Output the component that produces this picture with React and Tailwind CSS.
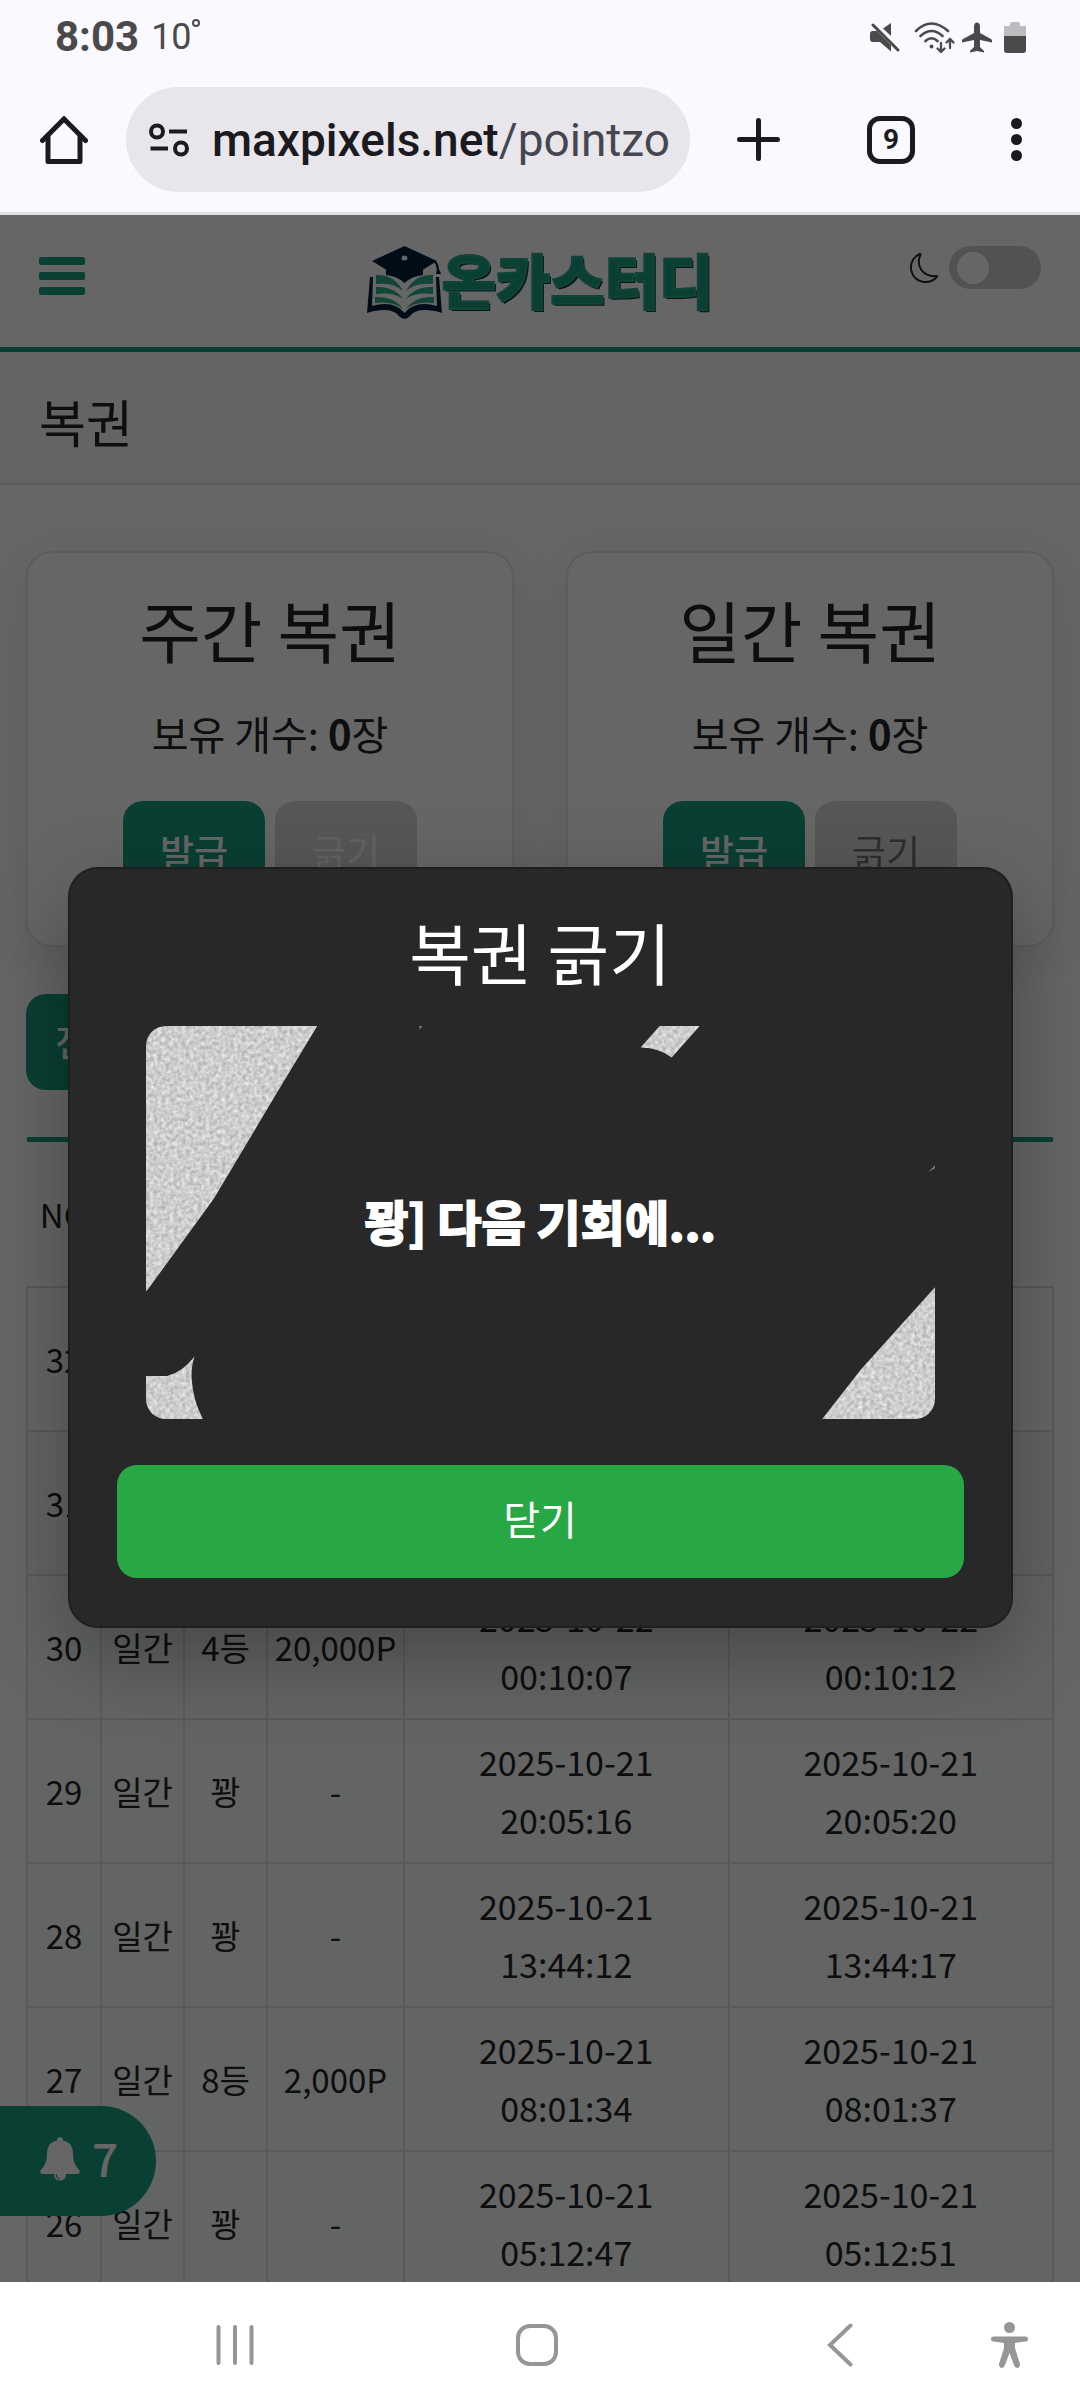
import React from 'react';
import { BsMoon } from 'react-icons/bs';

const rows = [
    { no: 32 },
    { no: 31 },
    { no: 30, type: '일간', rank: '4등', prize: '20,000P', issued: ['2025-10-22', '00:10:07'], scratched: ['2025-10-22', '00:10:12'] },
    { no: 29, type: '일간', rank: '꽝', prize: '-', issued: ['2025-10-21', '20:05:16'], scratched: ['2025-10-21', '20:05:20'] },
    { no: 28, type: '일간', rank: '꽝', prize: '-', issued: ['2025-10-21', '13:44:12'], scratched: ['2025-10-21', '13:44:17'] },
    { no: 27, type: '일간', rank: '8등', prize: '2,000P', issued: ['2025-10-21', '08:01:34'], scratched: ['2025-10-21', '08:01:37'] },
    { no: 26, type: '일간', rank: '꽝', prize: '-', issued: ['2025-10-21', '05:12:47'], scratched: ['2025-10-21', '05:12:51'] },
];

const StatusBar = () => (
    <div className="flex h-[74px] items-center justify-between pl-[55px] pr-[54px] text-[#4a4a4a] font-[Roboto,sans-serif]">
        <div className="flex items-center gap-3">
            <span className="text-[42px] font-bold leading-none">8:03</span>
            <span className="flex items-start text-[36px] leading-none">
                10
                <svg className="size-2" viewBox="0 0 8 8" fill="none" stroke="currentColor" strokeWidth="2">
                    <circle cx="4" cy="4" r="3" />
                </svg>
            </span>
        </div>
        <div className="flex items-center">
            <svg className="h-[32px] w-[30px]" viewBox="0 0 30 32" fill="currentColor">
                <path d="M3 10h4l14 14v6.500L10 21H3q-3 0-3-3v-5q0-3 3-3z" />
                <path d="M21 2v13l-8-7.500z" />
                <path d="M3 4l25 25" stroke="currentColor" strokeWidth="3" strokeLinecap="round" />
            </svg>
            <svg className="ml-[14px] h-[32px] w-[42px]" viewBox="0 0 42 32" fill="none" stroke="currentColor" strokeWidth="2.600" strokeLinecap="round">
                <path d="M2 10q15-15 32 0M6.500 15q11-10 22 0M11.500 20q6-5.500 12 0" />
                <circle cx="17.500" cy="25.500" r="1" fill="currentColor" strokeWidth="2" />
                <path d="M27 22v8M23.500 27.500l3.500 3.500 3.500-3.500M36 27v-8M32.500 21.500l3.500-3.500 3.500 3.500" strokeWidth="2.300" />
            </svg>
            <svg className="ml-[5px] h-[32px] w-[32px]" viewBox="0 0 32 32" fill="currentColor">
                <path d="M16 1.500c2 0 3 2 3 4V12l11 6q1 .5 1 1.500v2l-12-2.500v7l4 4v1.500l-7-1.500-7 1.500V30l4-4v-7L1 21.500v-2q0-1 1-1.500l11-6V5.500c0-2 1-4 3-4z" />
            </svg>
            <svg className="ml-[11px] h-[32px] w-[22px]" viewBox="0 0 22 32" fill="currentColor">
                <path d="M0 15V5h6V3q0-2 2-2h6q2 0 2 2v2h6v10z" opacity="0.350" />
                <path d="M0 15h22v14q0 3-3 3H3q-3 0-3-3z" />
            </svg>
        </div>
    </div>
);

const BrowserBar = () => (
    <div className="flex h-[131px] items-center pl-10 pr-[58px] text-[#1b1a20] font-[Roboto,sans-serif]">
        <button type="button" aria-label="홈">
            <svg className="size-[48px]" viewBox="0 0 48 48" fill="none" stroke="currentColor" strokeWidth="5" strokeLinecap="round" strokeLinejoin="round">
                <path d="M2.500 24.500L24 3l21.500 21.500" strokeLinejoin="miter" />
                <path d="M8 21v24.500h32V21" />
            </svg>
        </button>
        <button type="button" className="ml-[38px] flex h-[105px] min-w-0 flex-1 items-center rounded-full bg-[#e8e6eb] pl-[23px] pr-[18px] text-left">
            <svg className="h-[34px] w-[40px] shrink-0" viewBox="0 0 40 34" fill="none" stroke="currentColor" strokeWidth="4">
                <circle cx="8" cy="8.500" r="6" />
                <path d="M20 8.500h18M1.500 25.500H19" />
                <circle cx="32" cy="25.500" r="6" />
            </svg>
            <span className="ml-[23px] min-w-0 flex-1 whitespace-nowrap text-[46px] font-medium leading-[64px]">
                maxpixels.net<span className="font-normal text-[#454750]">/pointzo</span>
            </span>
        </button>
        <button type="button" aria-label="새 탭" className="ml-[47px]">
            <svg className="size-[43px]" viewBox="0 0 43 43" stroke="currentColor" strokeWidth="5" strokeLinecap="round">
                <path d="M21.500 2.500v38M2.500 21.500h38" />
            </svg>
        </button>
        <button type="button" className="ml-[87px] flex size-[48px] items-center justify-center rounded-[13px] border-5 border-[#1b1a20] text-[28px] font-bold leading-none">
            9
        </button>
        <button type="button" aria-label="메뉴" className="ml-[96px] flex w-[11px] flex-col gap-[5px]">
            <span className="size-[11px] rounded-full bg-[#1b1a20]" />
            <span className="size-[11px] rounded-full bg-[#1b1a20]" />
            <span className="size-[11px] rounded-full bg-[#1b1a20]" />
        </button>
    </div>
);

const Logo = () => (
    <a href="#" className="flex items-start">
        <svg className="h-[74px] w-[75px]" viewBox="0 0 75 74">
            <g fill="#02213a">
                <path d="M37.500 1L70 16 37.500 36 5 16z" />
                <path d="M19 22v8q11 1 18.500 8Q45 31 56 30v-8L37.500 32z" />
                <path d="M68 16q4 1 4 12h-2q0-10-4-11z" />
                <path d="M70 24h2l2 5h-5z" />
                <path d="M3 32h3L5 61q22-6 32.500 7Q48 55 70 61l-1-29h3l3 36q-24-7-32 3-5.500 6-11 0-8-10-32-3z" />
            </g>
            <ellipse cx="37.500" cy="13" rx="3" ry="2.500" fill="#fff" />
            <g fill="#2fae8c">
                <path d="M9 30q18-1 27 16-10-9-27-7z" />
                <path d="M9 42q18-1 27 12-10-7-27-5z" />
                <path d="M8 52q19-1 28 12-10-8-28-6z" />
                <path d="M66 30q-18-1-27 16 10-9 27-7z" />
                <path d="M66 42q-18-1-27 12 10-7 27-5z" />
                <path d="M67 52q-19-1-28 12 10-8 28-6z" />
            </g>
        </svg>
        <span className="text-[59px] font-black leading-[68px] text-[#1b9d7f] [-webkit-text-stroke:2px_#2fa88c] [text-shadow:2px_2px_0_#0b3f33]">온카스터디</span>
    </a>
);

const SiteHeader = () => (
    <header className="flex h-[137px] items-start justify-between border-b-5 border-[#1b9d7f] bg-white px-[39px]">
        <div className="mt-[42px] w-[200px]">
            <button type="button" aria-label="메뉴 열기" className="flex w-[46px] flex-col gap-[7px]">
                <span className="h-2 w-full rounded-[2px] bg-[#1b9d7f]" />
                <span className="h-2 w-full rounded-[2px] bg-[#1b9d7f]" />
                <span className="h-2 w-full rounded-[2px] bg-[#1b9d7f]" />
            </button>
        </div>
        <div className="mt-[30px]">
            <Logo />
        </div>
        <label className="mt-[31px] flex w-[200px] items-center justify-end gap-[9px] text-[#222]">
            <BsMoon className="size-[30px]" />
            <input type="checkbox" role="switch" aria-label="다크 모드" className="peer sr-only" />
            <span className="flex h-[43px] w-[92px] items-center rounded-full bg-[#ccc] px-2">
                <span className="size-[32px] rounded-full bg-white" />
            </span>
        </label>
    </header>
);

const TicketCard = ({ title, scratchClass, disabled }) => (
    <section className="flex flex-col items-center rounded-[26px] border-2 border-[#e6e6e6] bg-white pb-12 pt-9 shadow-[0_12px_56px_rgba(0,0,0,0.1)]">
        <h2 className="text-[67px] leading-[80px]">{title}</h2>
        <p className="mt-[34px] text-[40px] leading-[60px]">
            보유 개수: <b>0</b>장
        </p>
        <div className="mt-[38px] flex gap-[10px] text-[37px] leading-[60px]">
            <button type="button" className="h-24 w-[142px] rounded-[20px] bg-[#1b9d7f] pt-1 font-medium text-white">발급</button>
            <button type="button" disabled={disabled} className={`h-24 w-[142px] rounded-[20px] bg-[#dadada] pt-1 ${scratchClass}`}>긁기</button>
        </div>
    </section>
);

const DateCell = ({ value }) => (
    <td className="border-2 border-[#dedede] text-[34px]">
        {value && (
            <>
                {value[0]}
                <br />
                {value[1]}
            </>
        )}
    </td>
);

const HistoryTable = () => (
    <table className="w-full table-fixed border-collapse text-center text-[33px] leading-[58px]">
        <thead>
            <tr className="h-[147px] border-t-5 border-[#1b9d7f]">
                <th className="w-[74px] font-normal">NO</th>
                <th className="w-[83px]" />
                <th className="w-[83px]" />
                <th className="w-[137px]" />
                <th />
                <th />
            </tr>
        </thead>
        <tbody>
            {rows.map((row) => (
                <tr key={row.no} className="h-36 bg-[#f7fbf9] first:bg-white">
                    <td className="border-2 border-[#dedede]">{row.no}</td>
                    <td className="border-2 border-[#dedede]">{row.type}</td>
                    <td className="border-2 border-[#dedede]">{row.rank}</td>
                    <td className="border-2 border-[#dedede]">{row.prize}</td>
                    <DateCell value={row.issued} />
                    <DateCell value={row.scratched} />
                </tr>
            ))}
        </tbody>
    </table>
);

const ScratchCard = () => (
    <div className="relative mx-[29px] mt-[38px] overflow-hidden rounded-[20px]">
        <svg className="block w-full" viewBox="0 0 788 393">
            <defs>
                <filter id="grain" x="0" y="0" width="100%" height="100%" colorInterpolationFilters="sRGB">
                    <feTurbulence type="fractalNoise" baseFrequency="0.25" numOctaves="2" seed="4" />
                    <feColorMatrix values="0.35 0 0 0 0.63  0.35 0 0 0 0.63  0.35 0 0 0 0.63  0 0 0 0 1" />
                    <feComposite in2="SourceGraphic" operator="in" />
                </filter>
            </defs>
            <g filter="url(#grain)">
                <path d="M0 0H171L130 68 68 172 26 230 2 263 0 265z" />
                <path d="M0 349.500H21Q36 346 48.500 330 45 340 45.500 352 47 374 57 393H0z" />
                <path d="M513 0H553L525 31.500Q513 22 494 21.500z" />
                <path d="M788 261L714 343 675 393H788z" />
                <path d="M273 4l3-4h-3zM781 146l7-7v3z" opacity="0.500" />
            </g>
        </svg>
        <p className="absolute inset-0 flex items-center justify-center pb-1 text-[48px] font-bold text-white [-webkit-text-stroke:2px_white]">꽝] 다음 기회에...</p>
    </div>
);

const ScratchModal = () => (
    <div className="absolute inset-0 flex items-center justify-center bg-black/60 pb-0.5">
        <div role="dialog" aria-label="복권 긁기" className="w-7/8 rounded-[30px] border-2 border-[#1f1f1f] bg-[#282828] px-[47px] pb-12 pt-[45px] text-white shadow-[0_28px_84px_rgba(0,0,0,0.3)]">
            <h2 className="text-center text-[67px] leading-[74px]">복권 긁기</h2>
            <ScratchCard />
            <button type="button" className="mt-[46px] h-[113px] w-full rounded-[20px] bg-[#28a745] pb-2 text-[40px]">닫기</button>
        </div>
    </div>
);

const NavBar = () => (
    <nav className="flex h-[126px] shrink-0 items-center bg-white pl-[215px] pr-[52px] text-[#969696]">
        <button type="button" aria-label="최근 앱">
            <svg className="h-[42px] w-[40px]" viewBox="0 0 40 42" stroke="currentColor" strokeWidth="4" strokeLinecap="round">
                <path d="M3.500 3v36M20 3v36M36.500 3v36" />
            </svg>
        </button>
        <span className="flex-1" />
        <button type="button" aria-label="홈 화면" className="size-[42px] rounded-[14px] border-4 border-[#969696]" />
        <span className="flex-1" />
        <button type="button" aria-label="뒤로" className="pl-2">
            <svg className="h-[44px] w-[26px]" viewBox="0 0 26 44" fill="none" stroke="currentColor" strokeWidth="4" strokeLinecap="round">
                <path d="M23.500 2.500L3 22l20.500 19.500" />
            </svg>
        </button>
        <button type="button" aria-label="접근성" className="ml-[138px]">
            <svg className="h-[46px] w-[37px]" viewBox="0 0 37 46" fill="currentColor">
                <circle cx="18.500" cy="5.500" r="5.500" />
                <path d="M2.500 14.500h32a2.500 2.500 0 010 5L24 21v5l5 16q0 4-3 4-2 0-3-3l-4.500-12L14 43q-1 3-3 3-3 0-3-4l5-16v-5l-10.500-1.500a2.500 2.500 0 010-5z" />
            </svg>
        </button>
    </nav>
);

export default function App() {
    return (
        <div className="flex h-screen flex-col overflow-hidden font-['Noto_Sans_CJK_KR',sans-serif]">
            <div className="shrink-0 border-b-3 border-[#e1e0e6] bg-[#faf9ff] pb-[7px]">
                <StatusBar />
                <BrowserBar />
            </div>
            <div className="relative min-h-0 flex-1 overflow-hidden bg-white text-[#242424]">
                <SiteHeader />
                <h1 className="border-b-2 border-[#dee2e6] bg-[#f9f9f9] px-[39px] pb-[28px] pt-[35px] text-[51px] leading-[68px]">복권</h1>
                <main className="px-[26px] pt-[66px]">
                    <div className="grid grid-cols-2 gap-[52px]">
                        <TicketCard title="주간 복권" scratchClass="text-[#f8f8f8]" disabled />
                        <TicketCard title="일간 복권" scratchClass="text-[#6c757d]" />
                    </div>
                    <button type="button" className="mb-[47px] mt-[47px] block h-24 rounded-[20px] bg-[#1b9d7f] px-[29px] text-[37px] font-medium text-white">전체</button>
                    <HistoryTable />
                </main>
                <button type="button" aria-label="알림 7개" className="absolute bottom-[66px] left-0 flex h-[110px] w-[156px] items-center gap-3 rounded-r-full bg-[#1b9d7f] pb-1 pl-[40px] text-[46px] font-medium text-white">
                    <svg className="h-[44px] w-[40px] shrink-0" viewBox="0 0 40 44" fill="currentColor">
                        <path d="M20 0q3 0 3 3.500 10 2 10 13 0 11 6 16 2 3-1 4.500H2q-3-1.500-1-4.500 6-5 6-16 0-11 10-13Q17 0 20 0z" />
                        <path d="M14 37h12q0 6.500-6 6.500T14 37z" />
                        <path d="M16 37q0 4 4 5" fill="none" stroke="#1b9d7f" />
                    </svg>
                    <span className="pb-1">7</span>
                </button>
                <ScratchModal />
            </div>
            <NavBar />
        </div>
    );
}
